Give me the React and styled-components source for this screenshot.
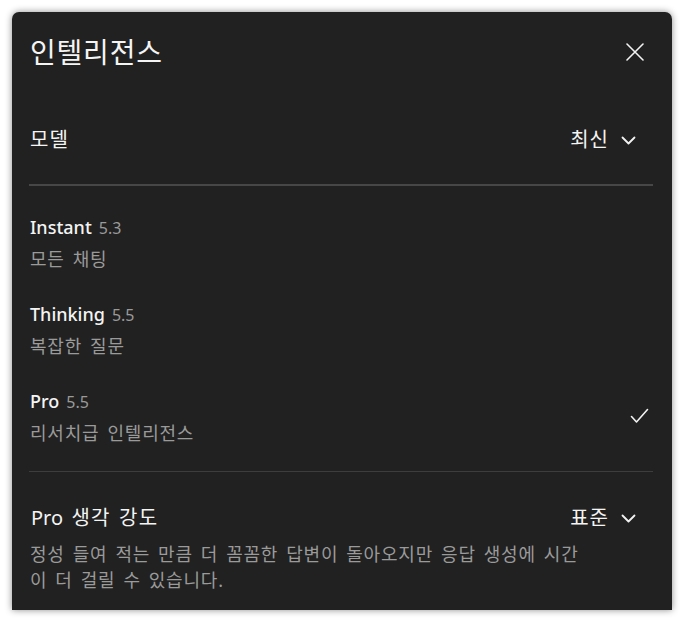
import styled, { createGlobalStyle } from "styled-components";

const GlobalStyle = createGlobalStyle`
	body {
		margin: 0;
		background: #ffffff;
		font-family: "Noto Sans", "Noto Sans CJK KR", sans-serif;
	}
`;

const models = [
	{ name: "Instant", version: "5.3", caption: "모든 채팅" },
	{ name: "Thinking", version: "5.5", caption: "복잡한 질문" },
	{ name: "Pro", version: "5.5", caption: "리서치급 인텔리전스", selected: true },
];

function ChevronDown() {
	return (
		<svg width="15" height="9" viewBox="0 0 15 9" fill="none">
			<path
				d="M1.5 1.5 L7.5 7.5 L13.5 1.5"
				stroke="#f2f2f2"
				strokeWidth="1.8"
				strokeLinecap="round"
				strokeLinejoin="round"
			/>
		</svg>
	);
}

function CloseIcon() {
	return (
		<svg width="18" height="18" viewBox="0 0 18 18" fill="none">
			<path
				d="M1 1 L17 17 M17 1 L1 17"
				stroke="#f2f2f2"
				strokeWidth="1.6"
				strokeLinecap="round"
			/>
		</svg>
	);
}

function CheckIcon() {
	return (
		<svg width="19" height="16" viewBox="0 0 19 16" fill="none">
			<path
				d="M1.5 8.5 L6.5 14 L17.5 1.5"
				stroke="#f2f2f2"
				strokeWidth="1.6"
				strokeLinecap="round"
				strokeLinejoin="round"
			/>
		</svg>
	);
}

export default function App() {
	return (
		<>
			<GlobalStyle />
			<Page>
				<Panel>
					<Header>
						<Title>인텔리전스</Title>
						<CloseButton aria-label="닫기">
							<CloseIcon />
						</CloseButton>
					</Header>

					<SettingRow>
						<SettingLabel>모델</SettingLabel>
						<SelectButton>
							최신
							<ChevronDown />
						</SelectButton>
					</SettingRow>
					<Divider $thick />

					<OptionList>
						{models.map((m) => (
							<Option key={m.name}>
								<OptionText>
									<OptionName>
										{m.name}
										<Version>{m.version}</Version>
									</OptionName>
									<Caption>{m.caption}</Caption>
								</OptionText>
								{m.selected && (
									<CheckWrap>
										<CheckIcon />
									</CheckWrap>
								)}
							</Option>
						))}
					</OptionList>
					<Divider />

					<EffortSection>
						<EffortHead>
							<SettingLabel>
								<Latin>Pro</Latin> 생각 강도
							</SettingLabel>
							<SelectButton>
								표준
								<ChevronDown />
							</SelectButton>
						</EffortHead>
						<Description>
							정성 들여 적는 만큼 더 꼼꼼한 답변이 돌아오지만 응답
							생성에 시간이 더 걸릴 수 있습니다.
						</Description>
					</EffortSection>
				</Panel>
			</Page>
		</>
	);
}

const Page = styled.div`
	padding: 12px 13px 13px 12px;
`;

const Panel = styled.div`
	width: 660px;
	height: 598px;
	box-sizing: border-box;
	background: #212121;
	border-radius: 7px 7px 0 0;
	box-shadow: 0 0 7px rgba(0, 0, 0, 0.45);
	padding: 0 19px 0 17px;
	color: #f2f2f2;
	overflow: hidden;
`;

const Header = styled.div`
	display: flex;
	align-items: center;
	justify-content: space-between;
	height: 36px;
	padding-top: 22px;
`;

const Title = styled.h1`
	margin: 0 0 0 1px;
	font-size: 28px;
	font-weight: 400;
	letter-spacing: 0.8px;
	line-height: 36px;
	color: #f4f4f4;
`;

const CloseButton = styled.button`
	display: flex;
	align-items: center;
	justify-content: center;
	background: none;
	border: none;
	padding: 0;
	margin-right: 9px;
	cursor: pointer;
`;

const SettingRow = styled.div`
	display: flex;
	align-items: center;
	justify-content: space-between;
	height: 36px;
	padding: 52px 0 26px;
`;

const SettingLabel = styled.span`
	margin-left: 1px;
	font-size: 20px;
	letter-spacing: 1.2px;
	word-spacing: 2px;
	line-height: 26px;
	color: #f4f4f4;
`;

const Latin = styled.span`
	letter-spacing: 0;
`;

const SelectButton = styled.button`
	display: flex;
	align-items: center;
	gap: 12px;
	background: none;
	border: none;
	padding: 0;
	margin-right: 17px;
	font-family: inherit;
	font-size: 20px;
	letter-spacing: 1px;
	line-height: 26px;
	color: #f4f4f4;
	cursor: pointer;
`;

const Divider = styled.div`
	height: ${(p) => (p.$thick ? "2px" : "1px")};
	background: ${(p) => (p.$thick ? "#474747" : "#3d3d3d")};
`;

const OptionList = styled.div`
	padding: 14px 0 10px;
`;

const Option = styled.div`
	display: flex;
	align-items: center;
	justify-content: space-between;
	padding: 14px 0 15px 1px;
`;

const OptionText = styled.div`
	display: flex;
	flex-direction: column;
	gap: 6px;
`;

const OptionName = styled.div`
	display: flex;
	align-items: baseline;
	gap: 7px;
	height: 26px;
	font-size: 18px;
	font-weight: 500;
	line-height: 26px;
	color: #f4f4f4;
`;

const Version = styled.span`
	font-size: 16px;
	font-weight: 400;
	color: #9a9a9a;
`;

const Caption = styled.div`
	height: 26px;
	font-size: 18px;
	letter-spacing: 0.8px;
	word-spacing: 2.5px;
	line-height: 26px;
	color: #9a9a9a;
`;

const CheckWrap = styled.div`
	display: flex;
	margin: 0 4px 3px 0;
`;

const EffortSection = styled.div`
	padding: 33px 0 16px 1px;
`;

const EffortHead = styled.div`
	display: flex;
	align-items: center;
	justify-content: space-between;
	height: 26px;
`;

const Description = styled.p`
	margin: 10px 0 0;
	max-width: 562px;
	font-size: 18px;
	letter-spacing: 0.8px;
	word-spacing: 2.5px;
	line-height: 26px;
	color: #9a9a9a;
`;
